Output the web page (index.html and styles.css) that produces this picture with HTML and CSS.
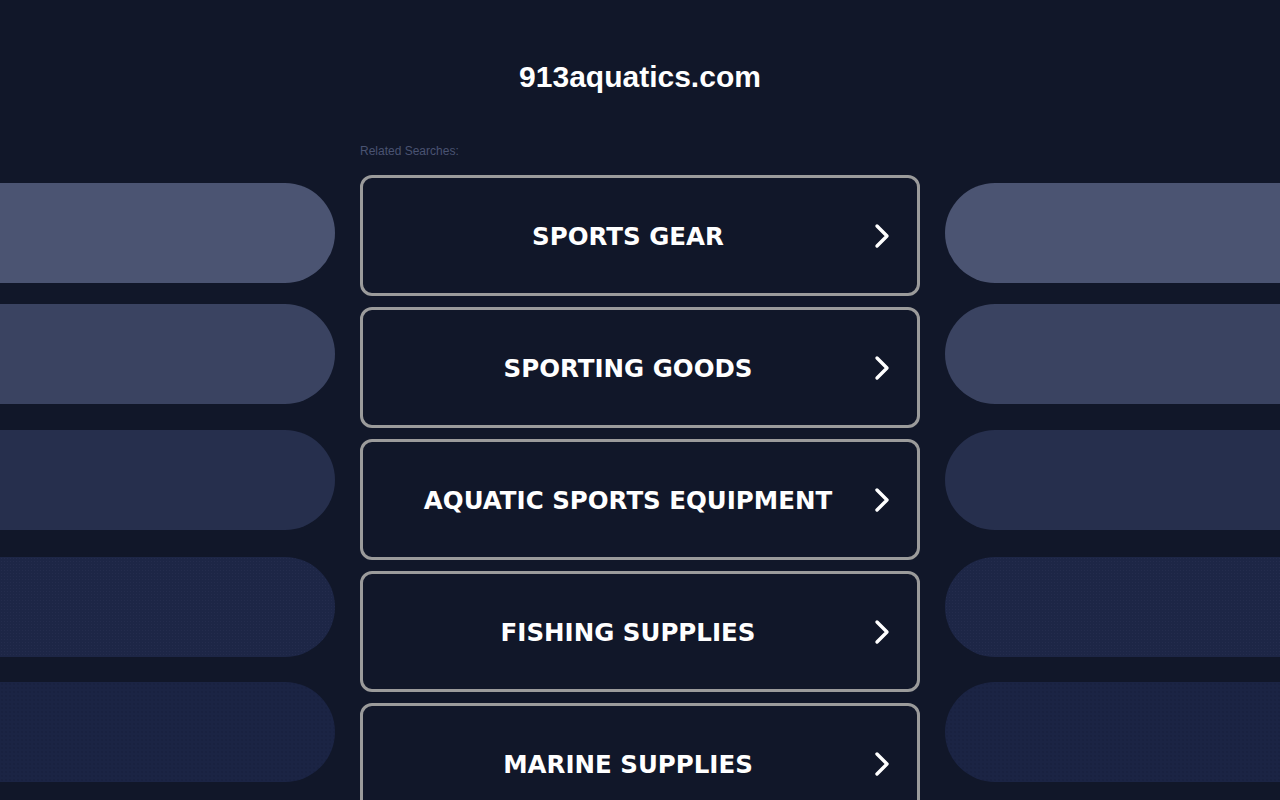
FILE: index.html
```html
<!DOCTYPE html>
<html lang="en">
<head>
  <meta charset="UTF-8" />
  <meta name="viewport" content="width=device-width, initial-scale=1.0" />
  <title>913aquatics.com</title>
  <link rel="stylesheet" href="styles.css">
</head>
<body>
  <h1 class="domain">913aquatics.com</h1>

  <div class="layout">
    <!-- decorative pills, left side -->
    <aside class="pills pills-left">
      <div class="pill pill-1"></div>
      <div class="pill pill-2"></div>
      <div class="pill pill-3"></div>
      <div class="pill pill-4"></div>
      <div class="pill pill-5"></div>
    </aside>

    <section class="searches">
      <p class="searches-label">Related Searches:</p>
      <a class="search-link" href="#">
        <span class="search-text">SPORTS GEAR</span>
        <svg class="chevron" viewBox="0 0 20 28"><polyline points="5,4 15,14 5,24" /></svg>
      </a>
      <a class="search-link" href="#">
        <span class="search-text">SPORTING GOODS</span>
        <svg class="chevron" viewBox="0 0 20 28"><polyline points="5,4 15,14 5,24" /></svg>
      </a>
      <a class="search-link" href="#">
        <span class="search-text">AQUATIC SPORTS EQUIPMENT</span>
        <svg class="chevron" viewBox="0 0 20 28"><polyline points="5,4 15,14 5,24" /></svg>
      </a>
      <a class="search-link" href="#">
        <span class="search-text">FISHING SUPPLIES</span>
        <svg class="chevron" viewBox="0 0 20 28"><polyline points="5,4 15,14 5,24" /></svg>
      </a>
      <a class="search-link" href="#">
        <span class="search-text">MARINE SUPPLIES</span>
        <svg class="chevron" viewBox="0 0 20 28"><polyline points="5,4 15,14 5,24" /></svg>
      </a>
    </section>

    <!-- decorative pills, right side -->
    <aside class="pills pills-right">
      <div class="pill pill-1"></div>
      <div class="pill pill-2"></div>
      <div class="pill pill-3"></div>
      <div class="pill pill-4"></div>
      <div class="pill pill-5"></div>
    </aside>
  </div>
</body>
</html>
```

FILE: styles.css
```css
/* Basic Reset */
* { margin: 0; padding: 0; box-sizing: border-box; }
html, body { height: 100%; }
body {
  font-family: "Liberation Sans", Arial, sans-serif;
  background: #111729;
  color: #fff;
  overflow: hidden;
}
.domain {
  text-align: center;
  font-size: 30px;
  line-height: 34px;
  font-weight: bold;
  padding: 60px 0 50px;
}
.layout {
  display: grid;
  grid-template-columns: 1fr 560px 1fr;
  column-gap: 25px;
}
/* Side pills */
.pills {
  display: flex;
  flex-direction: column;
  padding-top: 39px;
}
.pill {
  height: 100px;
}
.pill-2 { margin-top: 21px; }
.pill-3 { margin-top: 26px; }
.pill-4 { margin-top: 27px; }
.pill-5 { margin-top: 25px; }
.pills-left .pill { border-radius: 0 50px 50px 0; }
.pills-right .pill { border-radius: 50px 0 0 50px; }
.pill-1 { background: #4b5472; }
.pill-2 { background: #3a4361; }
.pill-3 { background: #262f4d; }
.pill-4 {
  background-color: #1d2646;
  background-image: radial-gradient(rgba(55,66,100,0.25) 0.5px, transparent 0.8px);
  background-size: 3px 3px;
}
.pill-5 {
  background-color: #1b2444;
  background-image: radial-gradient(rgba(10,14,30,0.35) 0.5px, transparent 0.8px);
  background-size: 4px 4px;
}
/* Search links */
.searches-label {
  font-size: 12px;
  line-height: 14px;
  color: #4a5372;
  margin-bottom: 17px;
}
.search-link {
  position: relative;
  display: flex;
  align-items: center;
  justify-content: center;
  height: 121px;
  margin-bottom: 11px;
  border: 3px solid #9b9b9b;
  border-radius: 12px;
  color: #fff;
  text-decoration: none;
}
.search-text {
  font-family: "DejaVu Sans", Verdana, sans-serif;
  font-weight: bold;
  font-size: 24.5px;
  margin-right: 24px;
  padding-top: 1px;
}
.chevron {
  position: absolute;
  right: 25px;
  top: 44px;
  width: 20px;
  height: 28px;
}
.chevron polyline {
  fill: none;
  stroke: #fff;
  stroke-width: 3.4;
  stroke-linecap: round;
  stroke-linejoin: round;
}
```
